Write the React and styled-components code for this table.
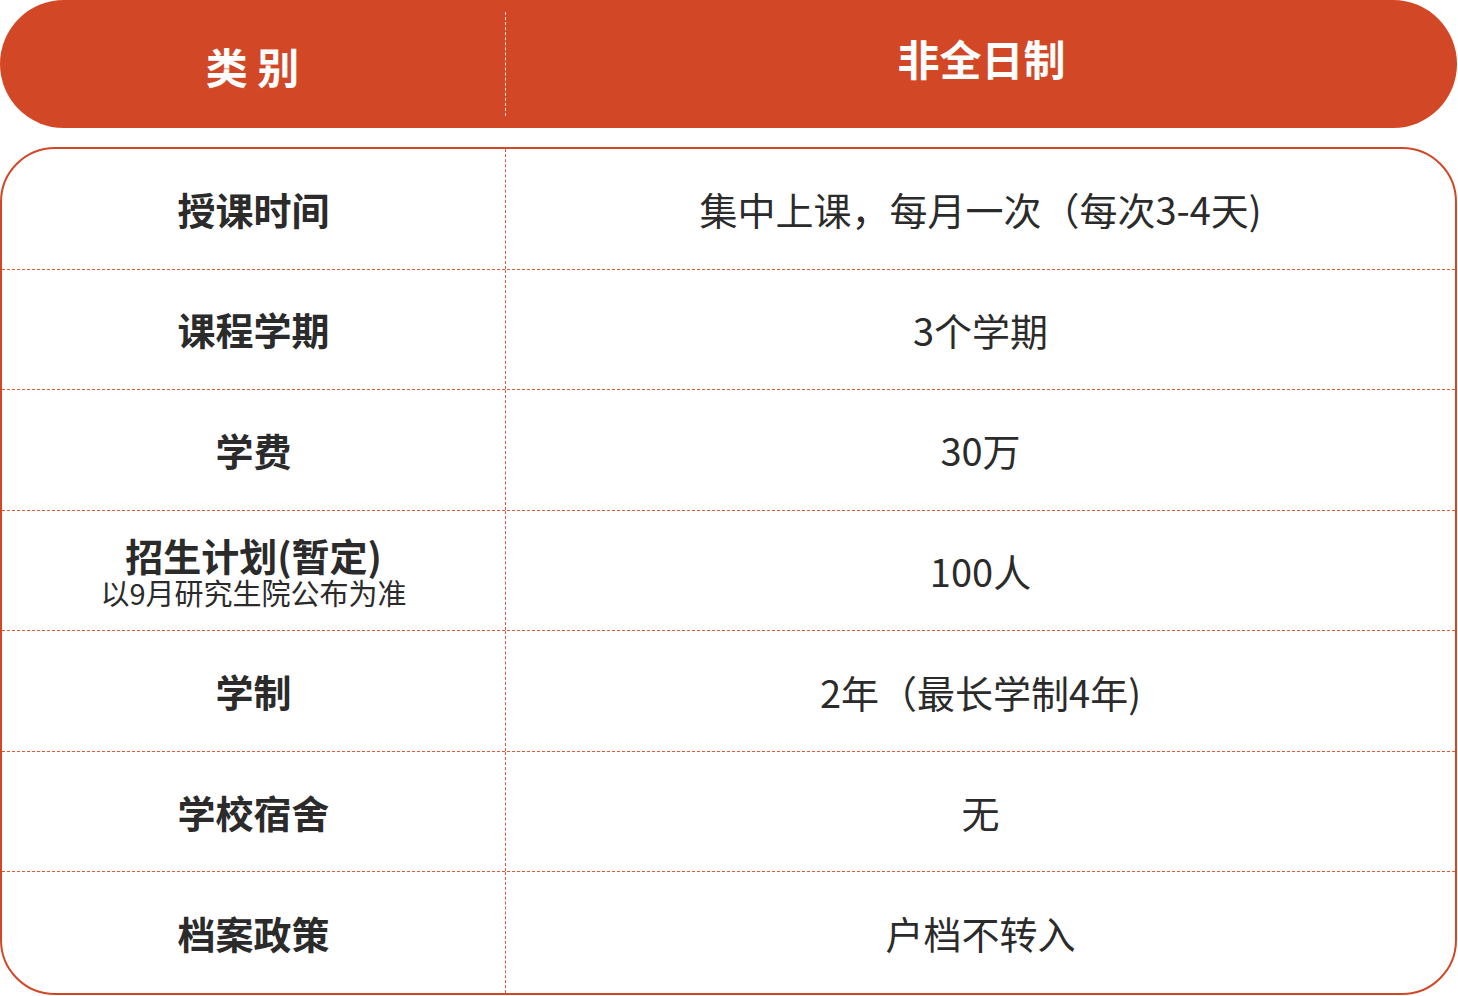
import React from "react";
import styled, { createGlobalStyle } from "styled-components";

const rows = [
  { label: "授课时间", value: "集中上课，每月一次（每次3-4天)" },
  { label: "课程学期", value: "3个学期" },
  { label: "学费", value: "30万" },
  { label: "招生计划(暂定)", note: "以9月研究生院公布为准", value: "100人" },
  { label: "学制", value: "2年（最长学制4年)" },
  { label: "学校宿舍", value: "无" },
  { label: "档案政策", value: "户档不转入" },
];

const App = () => {
  return (
    <Page>
      <GlobalStyle />
      <HeaderBar>
        <HeaderCell>类 别</HeaderCell>
        <HeaderDivider />
        <HeaderCell $raise>非全日制</HeaderCell>
      </HeaderBar>

      <Table>
        {rows.map((row, i) => (
          <Row key={row.label} $last={i === rows.length - 1}>
            <LabelCell>
              <Label>{row.label}</Label>
              {row.note && <Note>{row.note}</Note>}
            </LabelCell>
            <ValueCell>{row.value}</ValueCell>
          </Row>
        ))}
      </Table>
    </Page>
  );
};

const GlobalStyle = createGlobalStyle`
  * { box-sizing: border-box; }
  body {
    margin: 0;
    background: #ffffff;
    font-family: "Noto Sans CJK SC", "Noto Sans", sans-serif;
  }
`;

const ORANGE = "#d24826";

const Page = styled.div`
  width: 1458px;
  display: flex;
  flex-direction: column;
  gap: 19px;
`;

const HeaderBar = styled.div`
  height: 128px;
  width: 1457px;
  background: ${ORANGE};
  border-radius: 64px;
  display: grid;
  grid-template-columns: 505px 1px 1fr;
  align-items: center;
`;

const HeaderCell = styled.div`
  color: #ffffff;
  font-weight: 700;
  font-size: 42px;
  text-align: center;
  line-height: 1;
  transform: translateY(${(p) => (p.$raise ? "-6px" : "2px")});
`;

const HeaderDivider = styled.div`
  align-self: stretch;
  margin: 12px 0;
  border-left: 1px dashed rgba(255, 255, 255, 0.85);
`;

const Table = styled.div`
  width: 1457px;
  height: 848px;
  border: 2px solid ${ORANGE};
  border-radius: 55px;
  display: grid;
  grid-template-rows: repeat(7, 1fr);
  overflow: hidden;
`;

const Row = styled.div`
  display: grid;
  grid-template-columns: 503px 1fr;
  border-bottom: ${(p) => (p.$last ? "none" : `1px dashed #e0593a`)};
`;

const LabelCell = styled.div`
  display: flex;
  flex-direction: column;
  align-items: center;
  justify-content: center;
  gap: 2px;
  color: #2b2b2b;
`;

const Label = styled.div`
  font-size: 38px;
  font-weight: 700;
  line-height: 1.1;
`;

const Note = styled.div`
  font-size: 29px;
  font-weight: 400;
  line-height: 1;
`;

const ValueCell = styled.div`
  display: flex;
  align-items: center;
  justify-content: center;
  border-left: 1px dashed #e0593a;
  color: #2b2b2b;
  font-size: 38px;
  font-weight: 400;
`;

export default App;
